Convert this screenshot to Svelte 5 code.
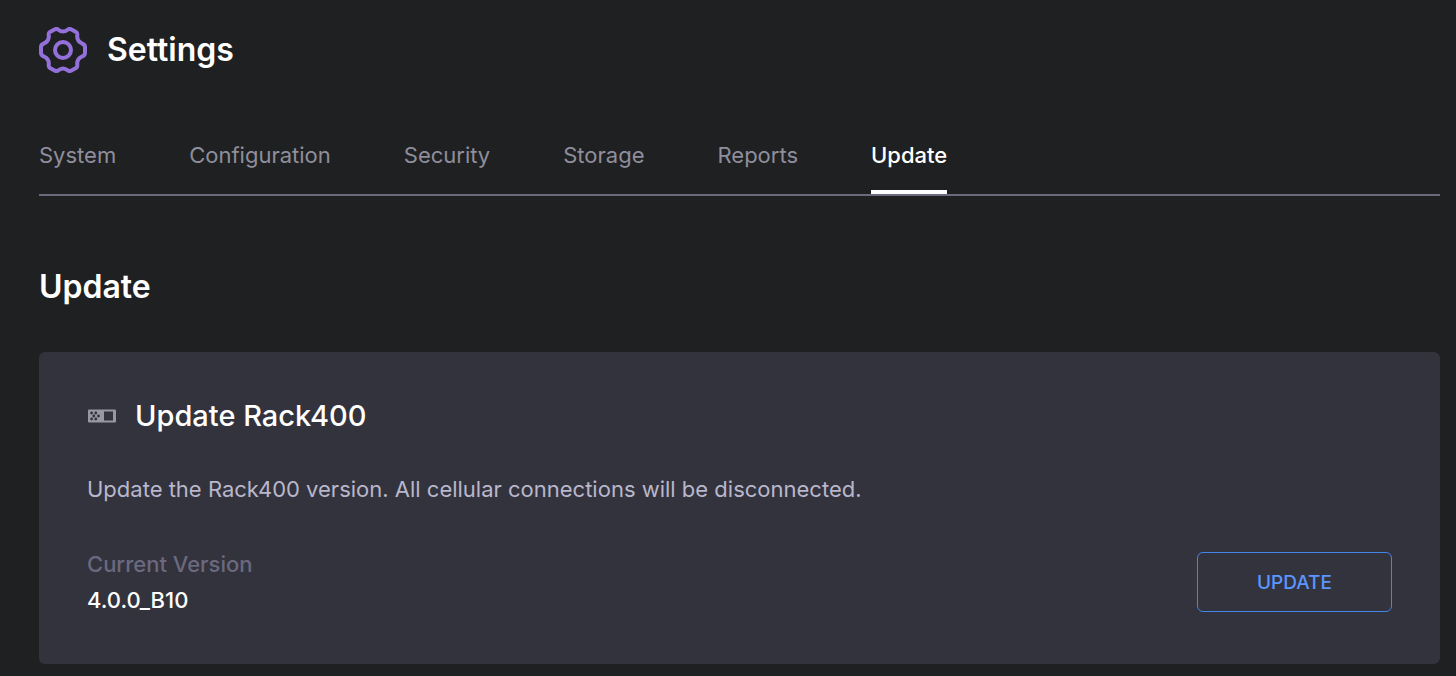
<script>
  const tabs = ['System', 'Configuration', 'Security', 'Storage', 'Reports', 'Update']

  let activeTab = $state('Update')
  let version = $state('4.0.0_B10')
</script>

<svelte:head>
  <title>Settings</title>
</svelte:head>

<main class="settings">
  <header class="page-header">
    <svg class="gear" width="48" height="46" viewBox="0 0 48 46" fill="none" stroke="currentColor" stroke-width="4" stroke-linejoin="round">
      <path d="M19 2.500Q17.500 1.500 16 2.300L11 5Q9.500 6 9.700 8Q10.500 14 5 16.500Q2 17.500 2 20V26Q2 28.500 5 29.500Q10.500 32 9.700 38Q9.500 40 11 41L16 43.700Q17.500 44.500 19 43.500Q24 39.500 29 43.500Q30.500 44.500 32 43.700L37 41Q38.500 40 38.300 38Q37.500 32 43 29.500Q46 28.500 46 26V20Q46 17.500 43 16.500Q37.500 14 38.300 8Q38.500 6 37 5L32 2.300Q30.500 1.500 29 2.500Q24 6.500 19 2.500Z" />
      <circle cx="24" cy="23" r="8" />
    </svg>
    <h1>Settings</h1>
  </header>

  <nav class="tabs">
    {#each tabs as tab}
      <a
        href="#{tab.toLowerCase()}"
        class="tab"
        class:active={tab === activeTab}
        onclick={() => (activeTab = tab)}
      >{tab}</a>
    {/each}
  </nav>

  <h2>Update</h2>

  <section class="card">
    <div class="card-title">
      <svg width="29" height="14" viewBox="0 0 29 14">
        <rect x="1" y="0.500" width="28" height="13" rx="1" fill="#9897a4" />
        <rect x="17" y="2.500" width="9" height="9" fill="#33333d" />
        <g fill="#33333d">
          <circle cx="4.600" cy="4" r="1.400" />
          <circle cx="8.800" cy="4" r="1.400" />
          <circle cx="6.800" cy="7" r="1.400" />
          <circle cx="11.500" cy="7" r="1.400" />
          <circle cx="4.600" cy="10" r="1.400" />
          <circle cx="8.800" cy="10" r="1.400" />
        </g>
      </svg>
      <h3>Update Rack400</h3>
    </div>
    <p class="description">Update the Rack400 version. All cellular connections will be disconnected.</p>
    <div class="card-footer">
      <dl>
        <dt>Current Version</dt>
        <dd>{version}</dd>
      </dl>
      <button type="button" class="update-button">UPDATE</button>
    </div>
  </section>
</main>

<style>
  :global(body) {
    background: #1f2021;
  }

  .settings {
    padding: 24px 16px 12px 39px;
    font-family: Inter, "Liberation Sans", sans-serif;
    font-size: 22px;
    line-height: 36px;
    color: #fff;
  }

  h1,
  h2,
  h3,
  p,
  dl,
  dd {
    margin: 0;
  }

  .page-header {
    display: flex;
    align-items: center;
    gap: 20px;
    height: 52px;
  }

  .gear {
    color: #9470db;
  }

  h1,
  h2 {
    font-size: 32px;
    font-weight: 600;
    line-height: 40px;
  }

  .tabs {
    display: flex;
    gap: 73px;
    margin-top: 61px;
    border-bottom: 2px solid #6b697b;
  }

  .tab {
    padding-bottom: 17px;
    border-bottom: 4px solid transparent;
    color: #8f8e9c;
    text-decoration: none;
  }

  .tab.active {
    border-color: #fff;
    color: #fff;
    font-weight: 500;
  }

  h2 {
    margin-top: 71px;
  }

  .card {
    margin-top: 45px;
    padding: 44px 48px 46px;
    background: #33333d;
    border-radius: 6px;
  }

  .card-title {
    display: flex;
    align-items: center;
    gap: 19px;
  }

  h3 {
    font-size: 29px;
    font-weight: 500;
    line-height: 40px;
  }

  .description {
    margin-top: 35px;
    color: #b9b7cb;
  }

  .card-footer {
    display: flex;
    align-items: center;
    justify-content: space-between;
    margin-top: 39px;
  }

  dt {
    color: #6b697f;
    font-weight: 500;
  }

  dd {
    font-weight: 500;
  }

  .update-button {
    width: 195px;
    height: 60px;
    background: transparent;
    border: 1px solid #4286ea;
    border-radius: 6px;
    color: #5c96ff;
    font-family: inherit;
    font-size: 19px;
    font-weight: 500;
    cursor: pointer;
  }
</style>
